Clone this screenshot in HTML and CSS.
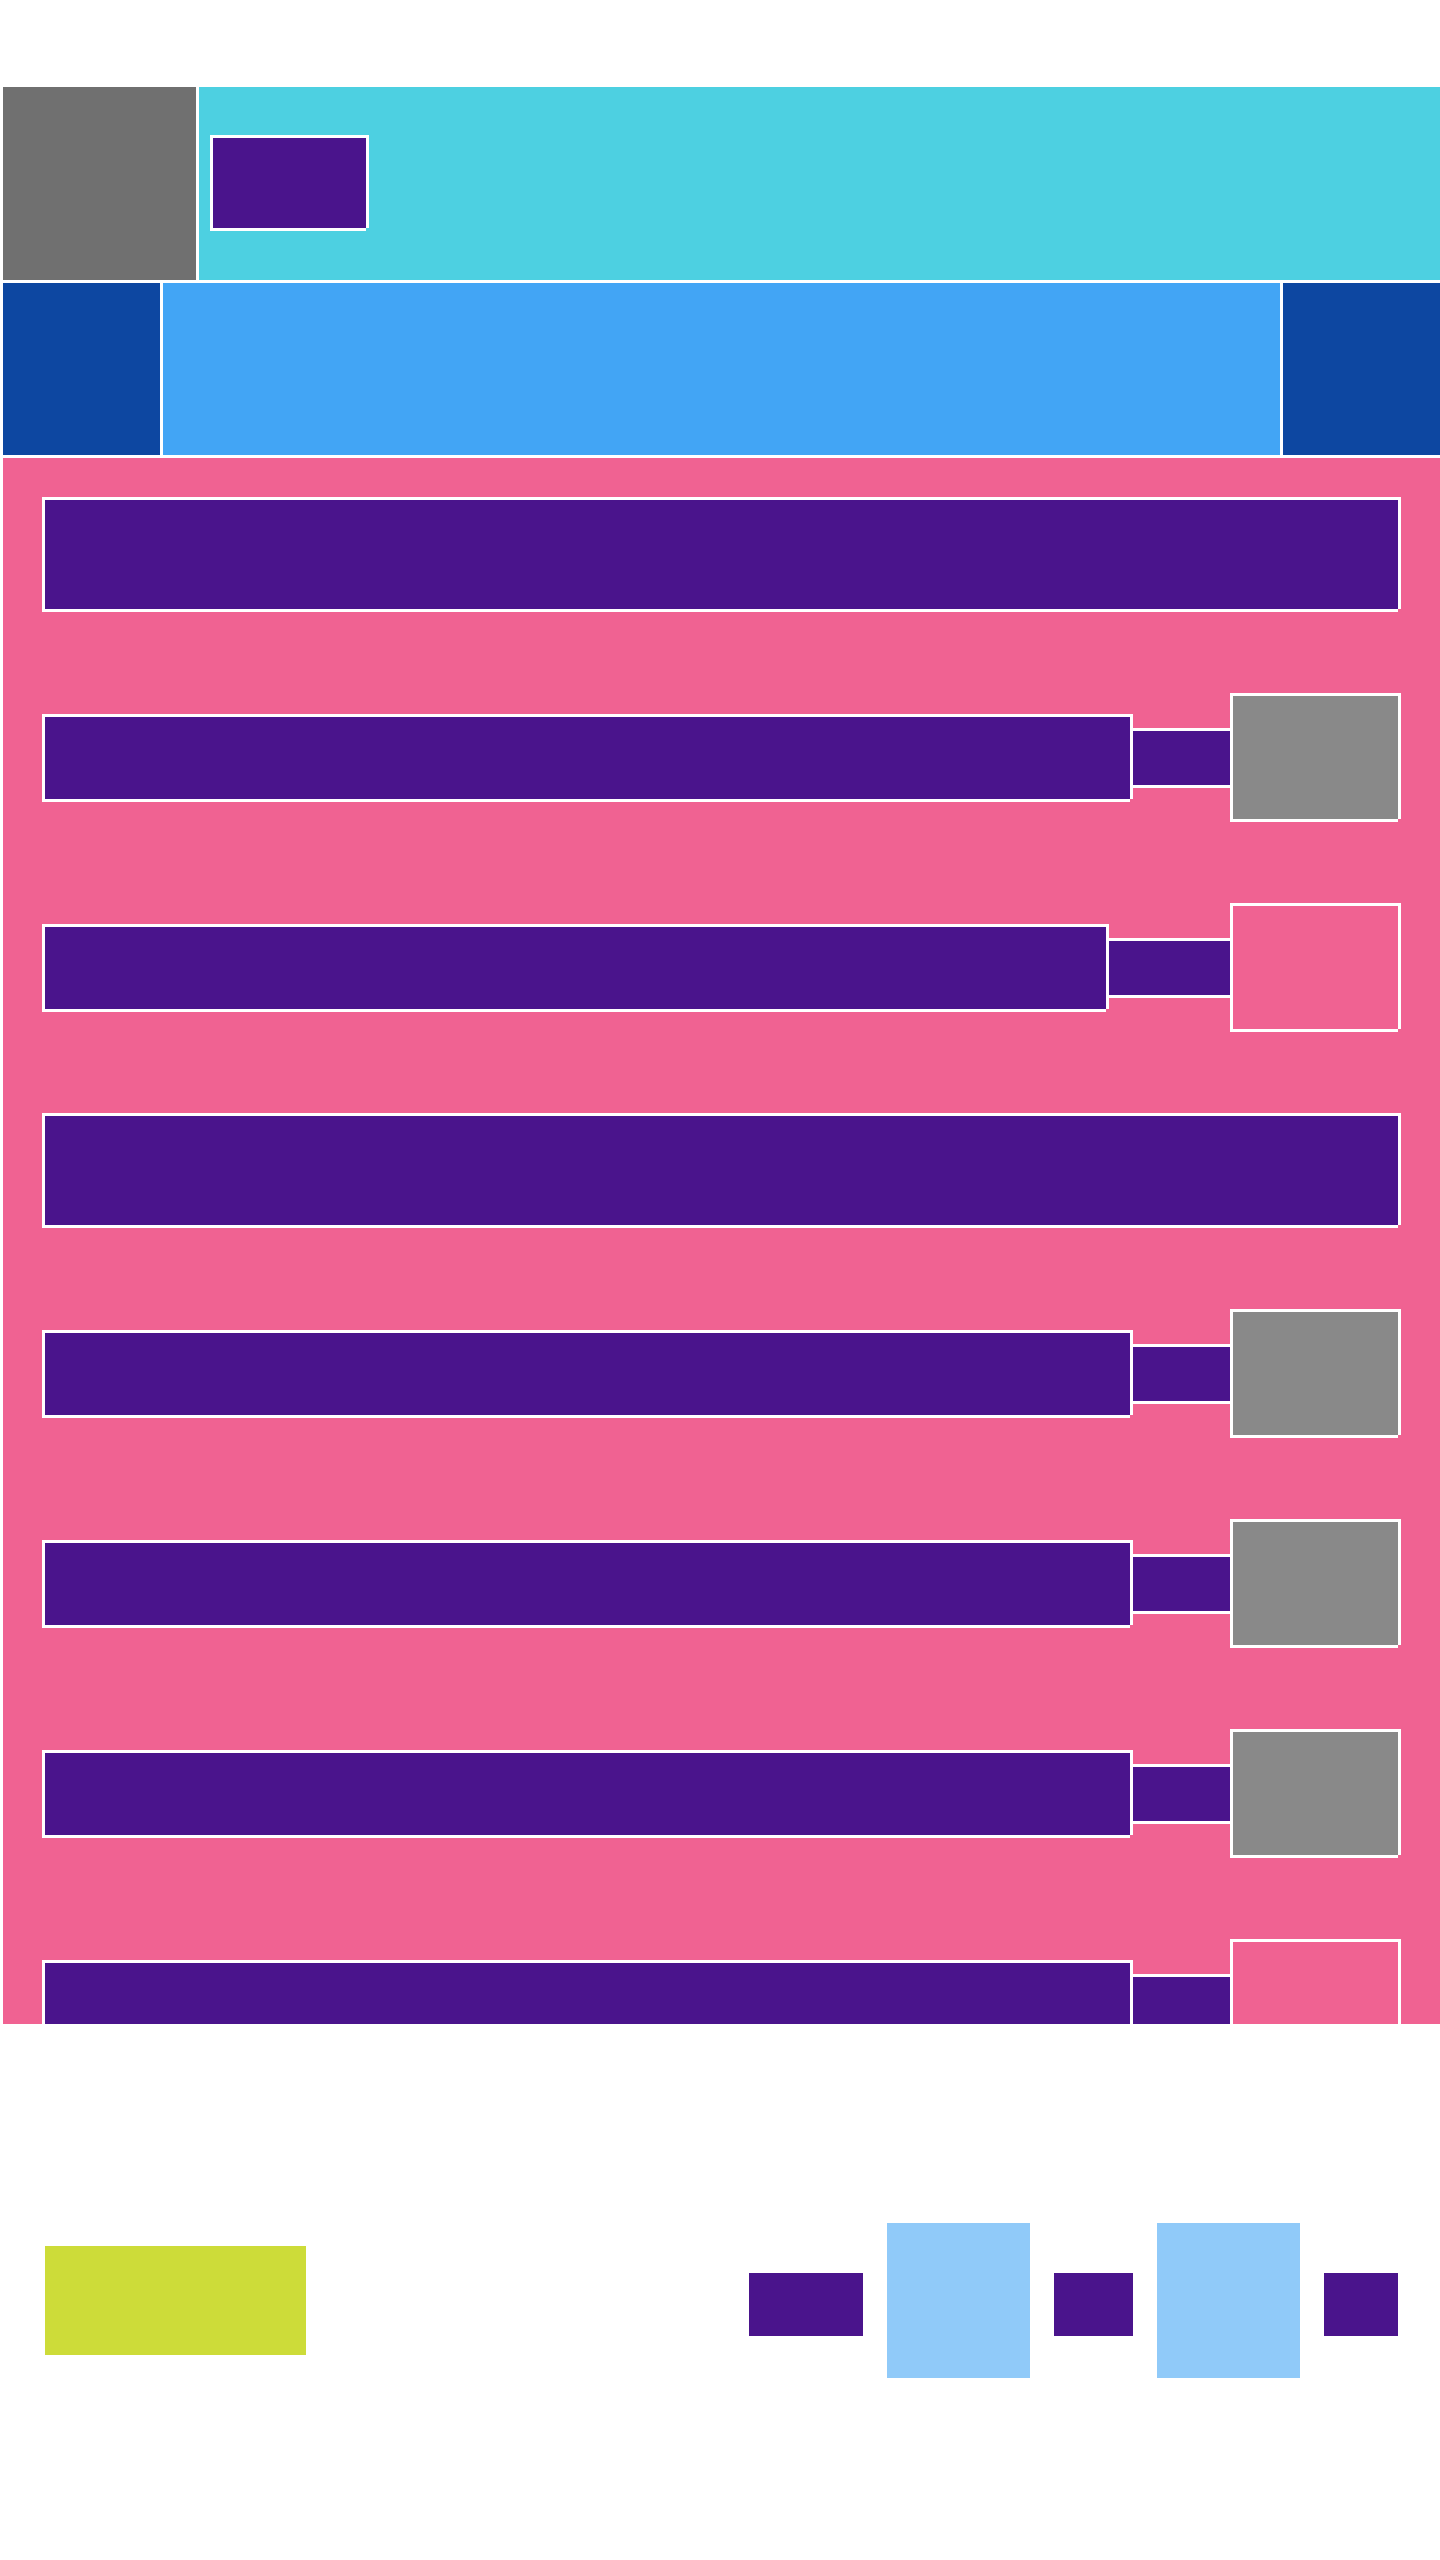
FILE: index.html
```html
<!DOCTYPE html>
<html lang="en">
<head>
	<meta charset="UTF-8">
	<meta name="viewport" content="width=device-width, initial-scale=1.0">
	<title>Layout</title>
	<link rel="stylesheet" href="styles.css">
</head>
<body>
	<div class="page">

		<!-- Top header -->
		<div class="top-row">
			<div class="avatar"></div>
			<div class="banner">
				<div class="block banner-chip"></div>
			</div>
		</div>

		<!-- Nav row -->
		<div class="nav-row">
			<div class="nav-side"></div>
			<div class="nav-main"></div>
			<div class="nav-side"></div>
		</div>

		<!-- List -->
		<div class="list">
			<div class="block bar-full"></div>

			<div class="row">
				<div class="block bar"></div>
				<div class="block link"></div>
				<div class="block thumb"></div>
			</div>

			<div class="row">
				<div class="block bar bar-short"></div>
				<div class="block link"></div>
				<div class="block thumb thumb-empty"></div>
			</div>

			<div class="block bar-full"></div>

			<div class="row">
				<div class="block bar"></div>
				<div class="block link"></div>
				<div class="block thumb"></div>
			</div>

			<div class="row">
				<div class="block bar"></div>
				<div class="block link"></div>
				<div class="block thumb"></div>
			</div>

			<div class="row">
				<div class="block bar"></div>
				<div class="block link"></div>
				<div class="block thumb"></div>
			</div>

			<div class="row">
				<div class="block bar"></div>
				<div class="block link"></div>
				<div class="block thumb thumb-empty"></div>
			</div>
		</div>

		<!-- Footer -->
		<div class="footer">
			<div class="footer-logo"></div>
			<div class="footer-nav">
				<div class="footer-dot dot-wide"></div>
				<div class="footer-card"></div>
				<div class="footer-dot dot-mid"></div>
				<div class="footer-card"></div>
				<div class="footer-dot dot-small"></div>
			</div>
		</div>

	</div>
</body>
</html>
```

FILE: styles.css
```css
/* Global */
body {
	margin: 0;
	background-color: #fff;
	overflow: hidden;
}

.page {
	display: flex;
	flex-direction: column;
	gap: 3px;
	padding: 87px 0 0 3px;
	height: 2560px;
	box-sizing: border-box;
}

/* Outlined purple block: white edge on all four sides */
.block {
	box-sizing: border-box;
	background-color: #4a148c;
	border-top: 3px solid #fff;
	border-left: 3px solid #fff;
	box-shadow: 3px 0 0 #fff, 0 3px 0 #fff;
}

/* Top header */
.top-row {
	display: flex;
	gap: 3px;
	height: 193px;
	flex: none;
}

.avatar {
	width: 193px;
	background-color: #707070;
}

.banner {
	flex: 1;
	display: flex;
	align-items: center;
	padding: 0 0 4px 11px;
	background-color: #4dd0e1;
}

.banner-chip {
	width: 156px;
	height: 93px;
}

/* Nav row */
.nav-row {
	display: flex;
	gap: 3px;
	height: 172px;
	flex: none;
}

.nav-side {
	width: 157px;
	background-color: #0d47a1;
}

.nav-main {
	flex: 1;
	background-color: #42a5f5;
}

/* List */
.list {
	height: 1566px;
	flex: none;
	box-sizing: border-box;
	overflow: hidden;
	padding: 39px 42px 0 39px;
	background-color: #f06292;
	display: flex;
	flex-direction: column;
	gap: 84px;
}

.bar-full {
	height: 112px;
	flex: none;
}

.row {
	display: flex;
	align-items: center;
	height: 126px;
	flex: none;
}

.bar {
	width: 1088px;
	height: 85px;
	flex: none;
}

.bar-short {
	width: 1064px;
}

.link {
	flex: 1;
	height: 57px;
}

.thumb {
	width: 168px;
	height: 126px;
	flex: none;
	background-color: #898989;
}

.thumb-empty {
	background-color: #f06292;
}

/* Footer */
.footer {
	flex: 1;
	display: flex;
	align-items: center;
	justify-content: space-between;
	padding: 14px 42px 0 42px;
}

.footer-logo {
	width: 261px;
	height: 109px;
	background-color: #cddc39;
}

.footer-nav {
	display: flex;
	align-items: center;
	gap: 24px;
}

.footer-card {
	width: 143px;
	height: 155px;
	background-color: #90caf9;
}

.footer-dot {
	height: 63px;
	margin-top: 8px;
	background-color: #4a148c;
}

.dot-wide {
	width: 114px;
}

.dot-mid {
	width: 79px;
}

.dot-small {
	width: 74px;
}
```
